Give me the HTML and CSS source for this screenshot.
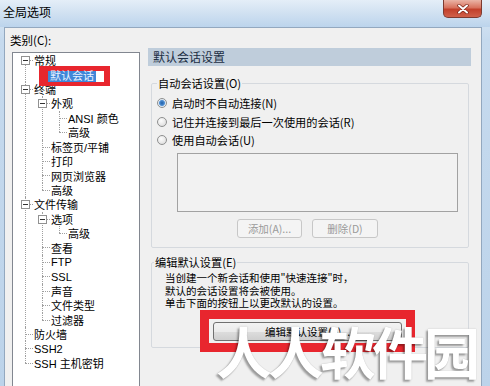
FILE: index.html
```html
<!DOCTYPE html>
<html lang="zh-CN">
  <head>
    <meta charset="UTF-8" />
    <title>全局选项</title>
    <link rel="stylesheet" href="styles.css">
  </head>
  <body>
    <div class="window">
      <div class="titlebar">
        <span class="title">全局选项</span>
        <span class="close">
          <svg width="12" height="10" viewBox="0 0 12 10">
            <path d="M2 1.5 L10 8.5 M10 1.5 L2 8.5" stroke="#7a2418" stroke-width="3.4" stroke-linecap="round" />
            <path d="M2 1.5 L10 8.5 M10 1.5 L2 8.5" stroke="#ffffff" stroke-width="2" stroke-linecap="round" />
          </svg>
        </span>
      </div>

      <div class="dialog">
        <div class="left">
          <div class="cat-label">类别(C):</div>
          <ul class="tree">
            <li>
              <i class="box"></i><span class="node">常规</span>
              <ul>
                <li>
                  <span class="node">
                    <span class="mark"><span class="sel">默认会话</span><span class="caret"></span></span>
                  </span>
                </li>
              </ul>
            </li>
            <li>
              <i class="box"></i><span class="node">终端</span>
              <ul>
                <li>
                  <i class="box"></i><span class="node">外观</span>
                  <ul>
                    <li><span class="node">ANSI 颜色</span></li>
                    <li><span class="node">高级</span></li>
                  </ul>
                </li>
                <li><span class="node">标签页/平铺</span></li>
                <li><span class="node">打印</span></li>
                <li><span class="node">网页浏览器</span></li>
                <li><span class="node">高级</span></li>
              </ul>
            </li>
            <li>
              <i class="box"></i><span class="node">文件传输</span>
              <ul>
                <li>
                  <i class="box"></i><span class="node">选项</span>
                  <ul>
                    <li><span class="node">高级</span></li>
                  </ul>
                </li>
                <li><span class="node">查看</span></li>
                <li><span class="node">FTP</span></li>
                <li><span class="node">SSL</span></li>
                <li><span class="node">声音</span></li>
                <li><span class="node">文件类型</span></li>
                <li><span class="node">过滤器</span></li>
              </ul>
            </li>
            <li><span class="node">防火墙</span></li>
            <li><span class="node">SSH2</span></li>
            <li><span class="node">SSH 主机密钥</span></li>
          </ul>
        </div>

        <div class="panel">
          <div class="panel-head">默认会话设置</div>

          <fieldset class="group auto">
            <legend>自动会话设置(O)</legend>
            <label class="radio"><span class="dot checked"></span>启动时不自动连接(N)</label>
            <label class="radio"><span class="dot"></span>记住并连接到最后一次使用的会话(R)</label>
            <label class="radio"><span class="dot"></span>使用自动会话(U)</label>
            <div class="listbox"></div>
            <div class="btns">
              <button class="btn add" disabled>添加(A)...</button>
              <button class="btn del" disabled>删除(D)</button>
            </div>
          </fieldset>

          <fieldset class="group edit">
            <legend>编辑默认设置(E)</legend>
            <p class="note">
              当创建一个新会话和使用"快速连接"时，<br />
              默认的会话设置将会被使用。<br />
              单击下面的按钮上以更改默认的设置。
            </p>
            <div class="redbox">
              <button class="btn edit-btn">编辑默认设置(S)...</button>
            </div>
          </fieldset>
        </div>
      </div>

      <div class="watermark">人人软件园</div>
    </div>
  </body>
</html>
```

FILE: styles.css
```css
:root {
  --frame: #c3d7ec;
  --face: #f0f0f0;
  --line: #a0a0a0;
  --group: #d5d9de;
  --red: #e8262e;
}
* {
  margin: 0;
  padding: 0;
  box-sizing: border-box;
}
body {
  width: 490px;
  height: 386px;
  overflow: hidden;
  background: linear-gradient(#dde9f5, #c6daee 40px, #bcd3ea);
  font-family: "Liberation Sans", "Noto Sans CJK SC", sans-serif;
  font-size: 11px;
  color: #000;
}
.window {
  position: relative;
  height: 386px;
}

/* title bar */
.titlebar {
  height: 27px;
  display: flex;
  align-items: flex-start;
  background: linear-gradient(#e4eef8, #cfe0f1 14px, #bcd4ec);
}
.title {
  font-family: "Noto Sans CJK SC", sans-serif;
  font-size: 12px;
  line-height: 24px;
  padding-left: 3px;
}
.close {
  margin-left: auto;
  margin-right: 8px;
  width: 39px;
  height: 18px;
  display: flex;
  align-items: center;
  justify-content: center;
  border: 1px solid #7d3a30;
  border-top: none;
  border-radius: 0 0 5px 5px;
  background: linear-gradient(#eab4a6, #d8725e 45%, #c2402b 55%, #d0604a);
}

/* dialog body */
.dialog {
  display: flex;
  margin-left: 4px;
  width: 478px;
  height: 359px;
  background: var(--face);
  border: 1px solid #93a8bf;
  border-bottom: none;
}
.left {
  width: 135px;
  padding: 5px 0 0 5px;
}
.cat-label {
  font-family: "Noto Sans CJK SC", sans-serif;
  font-size: 11.5px;
  line-height: 14px;
}

/* tree */
.tree {
  list-style: none;
  margin: 5px 0 0 2px;
  width: 128px;
  height: 340px;
  background: #fff;
  border: 1px solid #828790;
  padding-left: 4px;
}
.tree ul {
  list-style: none;
}
.tree li {
  position: relative;
  padding-left: 17px;
}
.tree li::before {
  content: "";
  position: absolute;
  left: 8px;
  top: 7px;
  width: 8px;
  border-top: 1px dotted var(--line);
}
.tree li::after {
  content: "";
  position: absolute;
  left: 8px;
  top: 0;
  bottom: 0;
  border-left: 1px dotted var(--line);
}
.tree > li:first-child::after {
  top: 7px;
}
.tree li:last-child::after {
  bottom: auto;
  height: 7px;
}
.box {
  position: absolute;
  z-index: 2;
  left: 4px;
  top: 3px;
  width: 9px;
  height: 9px;
  background: #fff;
  border: 1px solid #919191;
}
.box::after {
  content: "";
  position: absolute;
  left: 1px;
  top: 3px;
  width: 5px;
  border-top: 1px solid #333;
}
.node {
  display: flex;
  align-items: center;
  height: 14.43px;
  white-space: nowrap;
}
.mark {
  position: relative;
  z-index: 3;
  display: inline-flex;
  align-items: center;
  height: 20px;
  margin-left: -12px;
  margin-top: 3px;
  padding: 0 6px 0 9px;
  background: var(--red);
}
.sel {
  height: 11px;
  line-height: 11px;
  padding: 0 2px;
  background: #3f86d8;
  color: #e8f2ff;
}
.caret {
  width: 8px;
  height: 11px;
  background: #fff;
}

/* right panel */
.panel {
  width: 323px;
  margin-left: 8px;
  padding-top: 20px;
  font-family: "Noto Sans CJK SC", sans-serif;
  font-size: 11.2px;
}
.panel-head {
  height: 18px;
  line-height: 18px;
  padding-left: 5px;
  background: #bfcddb;
  color: #1d2f44;
  font-size: 12px;
}
.group {
  margin: 10px 2px 0 3px;
  border: 1px solid var(--group);
  border-radius: 2px;
}
.group legend {
  line-height: 14px;
  padding: 0 1px;
}
.auto {
  padding: 4px 0 9px 5px;
}
.radio {
  display: flex;
  align-items: center;
  gap: 5px;
  height: 18.5px;
}
.dot {
  width: 10px;
  height: 10px;
  border-radius: 50%;
  border: 1px solid #8e8f8f;
  background: radial-gradient(circle at 40% 35%, #fdfdfd, #d6d6d6);
}
.dot.checked {
  background: radial-gradient(circle, #1f5fa8 0, #4f8fd3 2.5px, #dfe9f3 3.5px, #f7f7f7);
}
.listbox {
  margin: 3.5px 0 0 20px;
  width: 281px;
  height: 59px;
  border: 1px solid #a2a2a2;
  background: #f2f2f2;
}
.btns {
  display: flex;
  gap: 10px;
  margin: 7px 0 0 80px;
}
.btn {
  height: 19px;
  font-family: "Noto Sans CJK SC", sans-serif;
  font-size: 10.5px;
  border-radius: 3px;
}
.btn[disabled] {
  border: 1px solid #c7c7c7;
  background: #f4f4f4;
  color: #9a9a9a;
}
.add {
  width: 65px;
}
.del {
  width: 66px;
}
.edit {
  margin-top: 7px;
  padding: 3px 0 0 2px;
}
.note {
  margin-left: 11px;
  font-size: 10.5px;
  line-height: 12.5px;
}
.redbox {
  display: inline-block;
  margin: 0.75px 0 -5px 46px;
  padding: 3px 4px 2px 4px;
  border: 9px solid var(--red);
}
.edit-btn {
  display: block;
  width: 189px;
  border: 1px solid #707070;
  background: linear-gradient(#f3f3f3, #ebebeb 50%, #dddddd 51%, #cfcfcf);
  color: #000;
}

/* watermark laid over the screenshot */
.watermark {
  position: absolute;
  left: 216px;
  top: 322px;
  font-family: "Noto Sans CJK SC", sans-serif;
  font-weight: 700;
  font-size: 56px;
  line-height: 1;
  letter-spacing: -4px;
  color: #fff;
  text-shadow: -2px 2px 2px rgba(0, 0, 0, 0.35), 0 0 1px rgba(0, 0, 0, 0.3);
  white-space: nowrap;
}
```
